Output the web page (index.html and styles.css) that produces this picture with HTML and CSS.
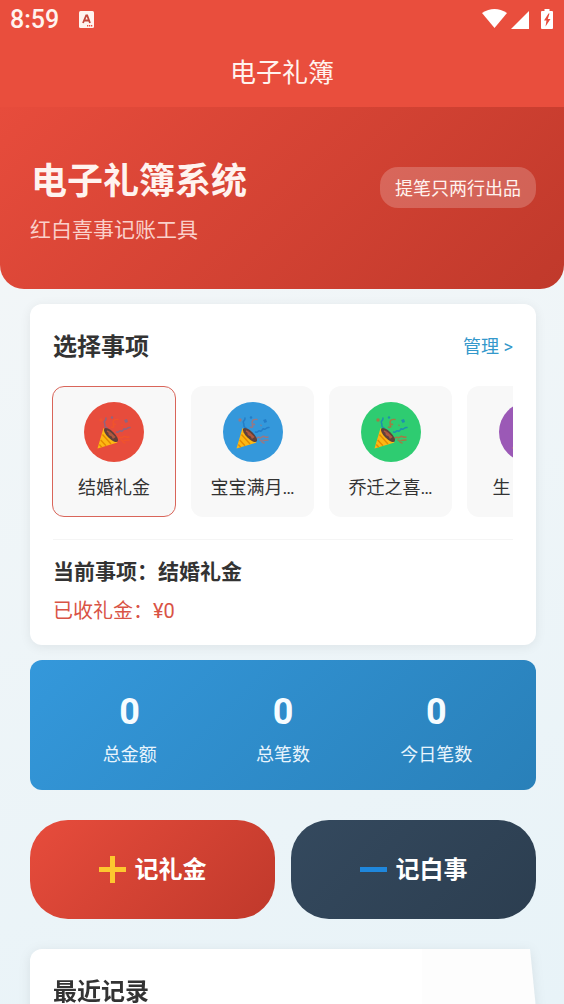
FILE: index.html
```html
<!DOCTYPE html>
<html lang="zh-CN">
<head>
<meta charset="utf-8">
<meta name="viewport" content="width=device-width, initial-scale=1">
<title>电子礼簿</title>
<link rel="stylesheet" href="styles.css">
</head>
<body>
<svg class="defs" aria-hidden="true">
  <symbol id="popper" viewBox="0 0 34 34">
    <g fill="none" stroke-width="1.500" stroke-linecap="round" stroke-linejoin="round">
      <path class="streamer-red" d="M14.500 12c1 1 3 0 2-1.500s1-2 2-1M16 8c0-3 2-4 5-3.500"/>
      <path class="streamer-red" d="M21 23c2-2 3 1 5-1s3 1 6 0M24 25c2 0 1 3 4 3M27 25.500l5-.5"/>
      <path class="streamer-blue" d="M10 13c-4-2-1-3-2.500-5s2-2 1.500-5"/>
      <path class="streamer-blue" d="M19.500 17c3 1 2-2 4.500-1s2-3 4-2 2-2 5-1.500"/>
    </g>
    <g class="bit-blue"><circle cx="15" cy="2.500" r="1.200"/><path d="M27 5l3-1 1 3-2.500 1z"/></g>
    <g class="bit-red"><circle cx="4" cy="5" r="1.700"/><path d="M24 9.500l2 .5-1 1.500z"/></g>
    <path fill="#fdb813" d="M6.500 13 .5 33.500 20.500 27.500z"/>
    <path fill="none" stroke="#e58a00" stroke-width="1.400" d="M5.500 19.500 14 29M3.700 25 9 30.700M2.300 29.500l2.500 2.700"/>
    <ellipse cx="14" cy="20" rx="9.300" ry="3.600" transform="rotate(45 14 20)" fill="#60403a"/>
    <path fill="none" stroke="#b0583f" stroke-width="1.600" d="M10 16l2 1 .5 2.500 3 1.500 1 2.500M13 17.500l5 5"/>
  </symbol>
</svg>
<div class="app">
  <header class="topbar">
    <div class="status">
      <span class="clock">8:59</span>
      <svg class="status-app" viewBox="0 0 15 17" aria-hidden="true"><rect width="15" height="17" rx="1.500" fill="#fff3ef"/><path d="M4 12 7.200 4.500h1L11 12M5.200 9.500h4.600" fill="none" stroke="#c4473b" stroke-width="1.800"/><path d="M8 14.800h5.500" stroke="#e74c3c" stroke-width="1.500" stroke-dasharray="1.300 .7"/></svg>
      <div class="status-icons">
        <svg width="25" height="20" viewBox="0 0 25 20" aria-hidden="true"><path fill="#fff" d="M0 4Q12.500-4 25 4L12.500 19z"/></svg>
        <svg width="18" height="18" viewBox="0 0 18 18" aria-hidden="true"><path fill="#fff" d="M18 0v18H0z"/></svg>
        <svg class="battery" width="12" height="20" viewBox="0 0 12 20" aria-hidden="true"><path fill="#fff" d="M3.500 0h5v2H11q1 0 1 1v16q0 1-1 1H1q-1 0-1-1V3q0-1 1-1h2.500z"/><path fill="#e74c3c" d="M7.500 4.500 3 11.500h2.500L4.500 17.500 9.500 10H6.800l1.700-5.500z"/></svg>
      </div>
    </div>
    <h1 class="page-title">电子礼簿</h1>
  </header>
  <main class="content">
    <section class="banner">
      <div>
        <h2 class="banner-title">电子礼簿系统</h2>
        <p class="banner-sub">红白喜事记账工具</p>
      </div>
      <span class="badge">提笔只两行出品</span>
    </section>
    <div class="stack">
      <section class="card">
        <div class="card-head">
          <h2 class="card-title">选择事项</h2>
          <a class="manage" href="#manage">管理 &gt;</a>
        </div>
        <div class="events">
          <button class="event is-active" type="button"><span class="dot red"><svg><use href="#popper"/></svg></span><span class="event-name">结婚礼金</span></button>
          <button class="event" type="button"><span class="dot blue"><svg><use href="#popper"/></svg></span><span class="event-name">宝宝满月…</span></button>
          <button class="event" type="button"><span class="dot green"><svg><use href="#popper"/></svg></span><span class="event-name">乔迁之喜…</span></button>
          <button class="event" type="button"><span class="dot purple"><svg><use href="#popper"/></svg></span><span class="event-name">生日礼金</span></button>
        </div>
        <div class="current">
          <p class="current-name">当前事项：结婚礼金</p>
          <p class="current-sum">已收礼金：¥0</p>
        </div>
      </section>
      <section class="stats">
        <div class="stat"><strong>0</strong><span>总金额</span></div>
        <div class="stat"><strong>0</strong><span>总笔数</span></div>
        <div class="stat"><strong>0</strong><span>今日笔数</span></div>
      </section>
      <div class="actions">
        <button class="action gift" type="button"><svg viewBox="0 0 27 27" aria-hidden="true"><path fill="#fdc82f" d="M11 0h5v11h11v5H16v11h-5V16H0v-5h11z"/></svg>记礼金</button>
        <button class="action mourn" type="button"><svg viewBox="0 0 27 27" aria-hidden="true"><path fill="#1f87dc" d="M0 11h27v5H0z"/></svg>记白事</button>
      </div>
      <div class="recent-shadow">
        <section class="recent"><h2 class="card-title">最近记录</h2></section>
      </div>
    </div>
  </main>
</div>
</body>
</html>
```

FILE: styles.css
```css
* { box-sizing: border-box; }
body, h1, h2, p { margin: 0; }
body {
  font-family: Roboto, "Noto Sans CJK SC", sans-serif;
  font-size: 18px;
  line-height: 26px;
  color: #333;
}
button { font: inherit; color: inherit; border: 0; cursor: pointer; }
.defs { position: absolute; width: 0; height: 0; }

.app {
  display: flex;
  flex-direction: column;
  height: 100vh;
  background: linear-gradient(160deg, #f5f7f8, #e8f3f8);
}
.topbar { flex: none; background: #e94e3d; color: #fff3ef; }
.status { display: flex; align-items: center; height: 38px; padding: 0 11px 0 10px; }
.clock { padding-top: 2px; font-size: 25px; font-weight: 500; line-height: 36px; }
.status-app { width: 15px; height: 17px; margin-left: 20px; }
.status-icons { display: flex; align-items: flex-end; gap: 4px; margin-left: auto; }
.battery { margin-left: 8px; }
.page-title { padding: 17px 0 16px; font-size: 26px; font-weight: 400; line-height: 36px; text-align: center; }

.content { flex: 1; min-height: 0; overflow-y: auto; scrollbar-width: none; }
.banner {
  display: flex;
  align-items: center;
  justify-content: space-between;
  padding: 47px 28px 45px 30px;
  border-radius: 0 0 24px 24px;
  background: linear-gradient(135deg, #e74c3c, #c0392b);
  color: #fff3ef;
}
.banner > div { display: flex; flex-direction: column; gap: 6px; }
.banner-title { padding-left: 1px; font-size: 36px; font-weight: 700; line-height: 56px; }
.banner-sub { font-size: 21px; line-height: 28px; color: #fad0ca; }
.badge {
  margin-bottom: 24px;
  padding: 9px 15px 7px;
  border-radius: 18px;
  background: rgba(255, 255, 255, .2);
  line-height: 25px;
}

.stack { display: flex; flex-direction: column; padding: 15px 28px 0 30px; }
.card {
  padding: 25px 23px 20px;
  border-radius: 12px;
  background: #fff;
  box-shadow: 0 2px 12px rgba(0, 0, 0, .07);
}
.card-head { display: flex; align-items: center; justify-content: space-between; margin-bottom: 21px; }
.card-title { font-size: 24px; font-weight: 700; line-height: 36px; }
.manage { color: #3498cb; text-decoration: none; }
.events { display: flex; gap: 15px; margin-left: -1px; overflow: hidden; }
.event {
  display: flex;
  flex: none;
  flex-direction: column;
  align-items: center;
  gap: 13px;
  width: 124px;
  padding: 15px;
  border: 1px solid transparent;
  border-radius: 12px;
  background: #f8f8f8;
}
.event + .event { width: 123px; }
.event.is-active { border-color: #d9655a; }
.dot { display: grid; place-items: center; width: 60px; height: 60px; border-radius: 50%; }
.dot svg { width: 34px; height: 34px; }
.red { background: #e74c3c; --streamer: #f0532c; --ribbon: #90647f; }
.blue { background: #3498db; --streamer: #9a7883; --ribbon: #237dc8; }
.green { background: #2ecc71; --streamer: #a27b45; --ribbon: #1d91ae; }
.purple { background: #9b59b6; --streamer: #d65366; --ribbon: #4a6fc0; }
.streamer-red { stroke: var(--streamer); }
.streamer-blue { stroke: var(--ribbon); }
.bit-red { fill: var(--streamer); }
.bit-blue { fill: var(--ribbon); }
.event-name { white-space: nowrap; }
.current { margin-top: 22px; padding-top: 17px; border-top: 1px solid #f5f5f5; }
.current-name { margin-bottom: 10px; font-size: 21px; font-weight: 700; line-height: 30px; }
.current-sum { font-size: 20px; line-height: 28px; color: #d95345; }

.stats {
  display: grid;
  grid-template-columns: repeat(3, 1fr);
  margin-top: 15px;
  padding: 30px 23px 22px;
  border-radius: 12px;
  background: linear-gradient(135deg, #3498db, #2980b9);
  color: #e9f5fd;
}
.stat { display: flex; flex-direction: column; align-items: center; gap: 8px; }
.stat strong { font-size: 36px; line-height: 44px; color: #f6fcff; }

.actions { display: grid; grid-template-columns: 1fr 1fr; gap: 16px; margin: 30px 0; }
.action {
  display: flex;
  align-items: center;
  justify-content: center;
  gap: 9px;
  height: 99px;
  border-radius: 38px;
  color: #fff;
  font-size: 24px;
  font-weight: 700;
}
.action svg { width: 27px; height: 27px; }
.gift { background: linear-gradient(135deg, #e74c3c, #c0392b); }
.mourn { background: linear-gradient(135deg, #34495e, #2c3e50); }

.recent-shadow { filter: drop-shadow(0 2px 6px rgba(0, 0, 0, .08)); }
.recent {
  min-height: 120px;
  padding: 25px 23px;
  border-radius: 12px 4px 0 0;
  background: linear-gradient(#fdfdfd, #fdfdfd) right / 114px 100% no-repeat #fff;
  clip-path: polygon(0 0, calc(100% - 6px) 0, 100% 60px, 100% 100%, 0 100%);
}
```
